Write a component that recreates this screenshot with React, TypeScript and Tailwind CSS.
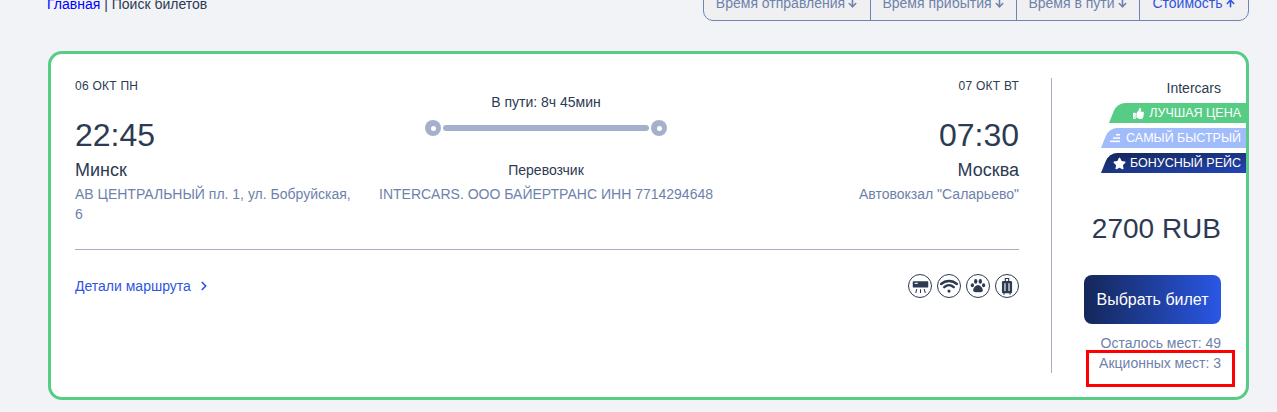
import { ArrowDown, ArrowUp, ChevronRight } from "lucide-react";
import { FaStar, FaThumbsUp } from "react-icons/fa";

const sorts = [
  { label: "Время отправления", width: "w-[166px]", active: false },
  { label: "Время прибытия", width: "w-[146px]", active: false },
  { label: "Время в пути", width: "w-[123px]", active: false },
  { label: "Стоимость", width: "w-[109px]", active: true },
];

function AcIcon() {
  return (
    <svg viewBox="0 0 16 16" className="w-[17px] h-[17px]" fill="#2c3a52">
      <path d="M1.5 3h13a.8.8 0 0 1 .8.8v4.4a.8.8 0 0 1-.8.8h-13a.8.8 0 0 1-.8-.8V3.800a.8.8 0 0 1 .8-.8z" />
      <rect x="2.500" y="4.500" width="3" height="1" fill="#fff" />
      <path d="M4.500 10.500 3.500 14M8 10.500V14M11.500 10.500l1 3.500" stroke="#2c3a52" strokeWidth="1" fill="none" />
    </svg>
  );
}

function WifiIcon() {
  return (
    <svg viewBox="0 0 16 16" className="w-[18px] h-[18px]" fill="none" stroke="#2c3a52" strokeWidth="2.200" strokeLinecap="round">
      <path d="M1 6.200c4-3.600 10-3.600 14 0" />
      <path d="M3.800 9c2.500-2.200 5.900-2.200 8.400 0" />
      <circle cx="8" cy="12.500" r="1.400" fill="#2c3a52" stroke="none" />
    </svg>
  );
}

function PawIcon() {
  return (
    <svg viewBox="0 0 16 16" className="w-[16px] h-[16px]" fill="#2c3a52">
      <ellipse cx="2.400" cy="7.200" rx="1.600" ry="2" />
      <ellipse cx="5.700" cy="3.400" rx="1.700" ry="2.300" />
      <ellipse cx="10.300" cy="3.400" rx="1.700" ry="2.300" />
      <ellipse cx="13.600" cy="7.200" rx="1.600" ry="2" />
      <path d="M8 7c2 0 4.800 3 4.800 5.200 0 2-2.300 2.300-4.800 1.700-2.500.6-4.800.3-4.800-1.700C3.200 10 6 7 8 7z" />
    </svg>
  );
}

function LuggageIcon() {
  return (
    <svg viewBox="0 0 16 16" className="w-[18px] h-[18px]" fill="#2c3a52">
      <path d="M6 .8h4v3H9V1.800H7v2H6z" />
      <rect x="3.500" y="3.500" width="9" height="11" rx="1.200" />
      <rect x="5.700" y="5.500" width="1" height="7" fill="#fff" />
      <rect x="9.300" y="5.500" width="1" height="7" fill="#fff" />
      <rect x="4.500" y="14.500" width="1.500" height="1" />
      <rect x="10" y="14.500" width="1.500" height="1" />
    </svg>
  );
}

function SpeedIcon() {
  return (
    <svg viewBox="0 0 12 10" className="w-[12px] h-[10px]" fill="#fff">
      <rect x="7" y="1" width="4" height="1.500" />
      <rect x="4" y="4.300" width="7" height="1.500" />
      <rect x="1" y="7.600" width="10" height="1.500" />
    </svg>
  );
}

export default function App() {
  return (
    <div className="h-screen overflow-hidden bg-[#f1f3f7] pl-[48px] pr-[28px] font-['Liberation_Sans',Arial,sans-serif] text-[14px] text-[#2c3a52]">
      {/* breadcrumbs and sort */}
      <div className="flex justify-between h-[37px] -mt-[14px]">
        <div className="pt-[8px] leading-[20px] text-[#2c3a52] -ml-[1px]">
          <span className="text-[#0000ff]">Главная</span> | Поиск билетов
        </div>
        <div className="flex h-[35px] border border-[#6f84b4] rounded-b-[10px] bg-[#f0f0f2]">
          {sorts.map((s) => (
            <div
              key={s.label}
              className={`flex items-center justify-center gap-[2px] border-l first:border-l-0 border-[#6f84b4] ${s.width} ${
                s.active ? "text-[#2f55e0]" : "text-[#6d82ab]"
              }`}
            >
              {s.label}
              {s.active ? <ArrowUp size={11} strokeWidth={3.500} /> : <ArrowDown size={11} strokeWidth={3.500} />}
            </div>
          ))}
        </div>
      </div>

      {/* ticket */}
      <div className="relative mt-[28px] flex h-[349px] border-[3px] border-[#56cc85] rounded-[14px] bg-white overflow-hidden py-[24px]">
        <div className="flex-1 pl-[24px] pr-[32px]">
          <div className="grid grid-cols-[285px_1fr_285px] border-b border-[#a5afc2] h-[172px]">
            <div>
              <div className="text-[12px] tracking-[0.25px] leading-[16px]">06 ОКТ ПН</div>
              <div className="text-[32px] leading-[38px] mt-[22px]">22:45</div>
              <div className="text-[18px] leading-[20px] mt-[6px]">Минск</div>
              <div className="leading-[20px] mt-[4px] text-[#6d82ab]">АВ ЦЕНТРАЛЬНЫЙ пл. 1, ул. Бобруйская, 6</div>
            </div>
            <div className="flex flex-col items-center pr-[2px]">
              <div className="leading-[20px] mt-[14px]">В пути: 8ч 45мин</div>
              <div className="flex items-center gap-[2px] mt-[8px]">
                <span className="flex items-center justify-center w-[16px] h-[16px] rounded-full bg-[#a5b1cc]">
                  <span className="w-[5px] h-[5px] rounded-full bg-white" />
                </span>
                <span className="w-[206px] h-[6px] rounded-full bg-[#a5b1cc]" />
                <span className="flex items-center justify-center w-[16px] h-[16px] rounded-full bg-[#a5b1cc]">
                  <span className="w-[5px] h-[5px] rounded-full bg-white" />
                </span>
              </div>
              <div className="leading-[20px] mt-[24px]">Перевозчик</div>
              <div className="leading-[20px] mt-[4px] text-[#6d82ab]">INTERCARS. ООО БАЙЕРТРАНС ИНН 7714294648</div>
            </div>
            <div className="text-right">
              <div className="text-[12px] tracking-[0.25px] leading-[16px]">07 ОКТ ВТ</div>
              <div className="text-[32px] leading-[38px] mt-[22px]">07:30</div>
              <div className="text-[18px] leading-[20px] mt-[6px]">Москва</div>
              <div className="leading-[20px] mt-[4px] text-[#6d82ab]">Автовокзал "Саларьево"</div>
            </div>
          </div>
          <div className="flex items-center justify-between mt-[24px]">
            <div className="flex items-center gap-[6px] text-[#2f55e0]">
              Детали маршрута
              <ChevronRight size={14} strokeWidth={3} />
            </div>
            <div className="flex gap-[5px]">
              {[AcIcon, WifiIcon, PawIcon, LuggageIcon].map((Icon, i) => (
                <div key={i} className="flex items-center justify-center w-[24px] h-[24px] rounded-full border border-[#2c3a52]">
                  <Icon />
                </div>
              ))}
            </div>
          </div>
        </div>

        {/* price */}
        <div className="w-[195px] border-l border-[#a5afc2] flex flex-col items-end pr-[25px]">
          <div className="leading-[20px]">Intercars</div>
          <div className="flex flex-col items-end gap-[5px] -mr-[25px] mt-[5px] text-[12.500px] text-white">
            <div className="relative flex items-center gap-[5px] h-[20px] pl-[20px] pr-[5px]">
              <span className="absolute inset-y-0 left-0 -right-[10px] bg-[#56cc85] -skew-x-[22deg] rounded-tl-[8px]" />
              <FaThumbsUp className="relative" size={11} />
              <span className="relative">ЛУЧШАЯ ЦЕНА</span>
            </div>
            <div className="relative flex items-center gap-[5px] h-[20px] pl-[4px] pr-[5px]">
              <span className="absolute inset-y-0 left-0 -right-[10px] bg-[#a1bcfb] -skew-x-[22deg] rounded-tl-[8px]" />
              <span className="relative"><SpeedIcon /></span>
              <span className="relative">САМЫЙ БЫСТРЫЙ</span>
            </div>
            <div className="relative flex items-center gap-[4px] h-[20px] pl-[8px] pr-[5px]">
              <span className="absolute inset-y-0 left-0 -right-[10px] bg-linear-to-br from-[#14275a] to-[#2446b8] -skew-x-[22deg] rounded-tl-[8px]" />
              <FaStar className="relative" size={13} />
              <span className="relative">БОНУСНЫЙ РЕЙС</span>
            </div>
          </div>
          <div className="text-[28px] leading-[32px] mt-[40px]">2700 RUB</div>
          <button className="w-[137px] h-[49px] mt-[30px] rounded-[8px] bg-linear-to-r from-[#14275a] to-[#2a57e6] text-white text-[16px]">
            Выбрать билет
          </button>
          <div className="leading-[20px] mt-[9px] text-[#6d82ab]">Осталось мест: 49</div>
          <div className="leading-[20px] text-[#6d82ab]">Акционных мест: 3</div>
        </div>

        {/* annotation */}
        <div className="absolute left-[1035px] top-[296px] w-[149px] h-[37px] border-[3px] border-[#ff0000]" />
      </div>
    </div>
  );
}
